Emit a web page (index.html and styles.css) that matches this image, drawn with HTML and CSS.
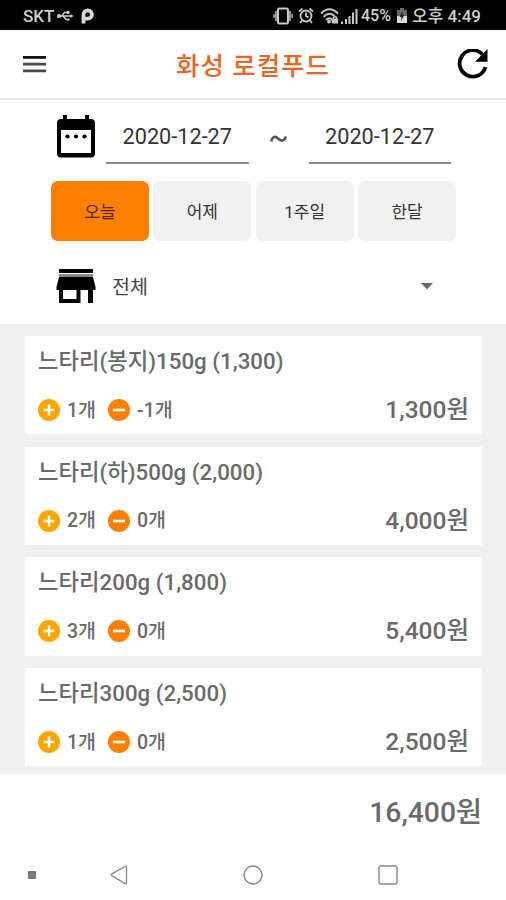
FILE: index.html
```html
<!DOCTYPE html>
<html lang="ko">
<head>
<meta charset="utf-8">
<title>화성 로컬푸드</title>
<link rel="stylesheet" href="styles.css">
</head>
<body>
<svg class="defs" width="0" height="0">
  <symbol id="plus" viewBox="0 0 22 22"><circle cx="11" cy="11" r="11" fill="#ffa405"/><path d="M11 5.500v11M5.500 11h11" stroke="#fff" stroke-width="2.400"/></symbol>
  <symbol id="minus" viewBox="0 0 22 22"><circle cx="11" cy="11" r="11" fill="#ff7f00"/><path d="M5 11h12" stroke="#fff" stroke-width="2.600"/></symbol>
</svg>
<div class="status">
  <span class="carrier">SKT</span>
  <svg class="usb" width="17" height="12" viewBox="0 0 17 12" fill="none" stroke="#cfcfcf" stroke-width="1.300"><path d="M2 6h12M4.500 6l3-3.500h3M6 6l3 3.500h2.500"/><circle cx="2" cy="6" r="1.300" fill="#cfcfcf"/><path d="M13.500 4l3 2-3 2z" fill="#cfcfcf" stroke="none"/><circle cx="11" cy="2.500" r="1" fill="#cfcfcf"/><path d="M10.500 8.500h2v2h-2z" fill="#cfcfcf" stroke="none"/></svg>
  <svg class="park" width="13" height="16" viewBox="0 0 13 16" fill="none" stroke="#d8d8d8" stroke-width="3.800"><path d="M2.500 15.500V6.500a4.200 4.200 0 1 1 4.200 4.200H3"/></svg>
  <svg class="vibrate" width="20" height="18" viewBox="0 0 20 18" fill="none" stroke="#c8c8c8"><rect x="5" y="1.500" width="10" height="15" rx="1.500" stroke-width="2"/><path d="M3 4v10M17 4v10" stroke-width="1.500"/><path d="M1 7v4M19 7v4" stroke-width="1.300"/></svg>
  <svg class="alarm" width="16" height="17" viewBox="0 0 16 17" fill="none" stroke="#c8c8c8" stroke-width="1.800"><circle cx="8" cy="9" r="5.500"/><path d="M8 5.500V9l2.500 1.500M1 4.500l3.500-3M15 4.500l-3.500-3M4 13.500l-2 2.500M12 13.500l2 2.500"/></svg>
  <svg class="wifi" width="19" height="17" viewBox="0 0 19 17" fill="none" stroke="#c8c8c8" stroke-width="1.800"><path d="M1 6.500q8.500-8.500 17 0M3.500 9.800q6-6 12 0M6 13q3.500-3.500 6 0"/><circle cx="9" cy="14.500" r="1" fill="#c8c8c8"/><path d="M12 11.500h6v5h-6z" fill="#c8c8c8" stroke="none"/><path d="M13.500 12v-2h3v2" stroke-width="1.200"/></svg>
  <svg class="signal" width="17" height="16" viewBox="0 0 17 16" fill="#c8c8c8"><path d="M0 13.500h2V16H0zM4 11h2v5H4zM7.500 8h2v8h-2zM11 4.500h2V16h-2zM14.500 1h2v15h-2z"/></svg>
  <span class="battery-text">45%</span>
  <svg class="battery" width="10" height="15" viewBox="0 0 10 15"><path d="M3 0h4v2h3v13H0V2h3z" fill="#666"/><path d="M0 8h10v7H0z" fill="#ddd"/><path d="M5.500 3L2.500 9h2l-.5 4 3.500-6h-2z" fill="#222"/></svg>
  <span class="clock">오후 4:49</span>
</div>
<header class="appbar">
  <svg width="23" height="17" viewBox="0 0 23 17"><path d="M0 0h23v2.800H0z" fill="#111"/><path d="M0 6.800h23v2.800H0zM0 13.500h23v2.800H0z" fill="#4a4a4a"/></svg>
  <h1>화성 로컬푸드</h1>
  <svg class="refresh" width="31" height="30" viewBox="0 0 31 30"><path d="M25.300 5.200A13.200 13.200 0 1 0 28.500 18" fill="none" stroke="#000" stroke-width="3.800"/><path d="M30.500 0v12.800H18z"/></svg>
</header>
<section class="filters">
  <div class="dates">
    <svg class="cal" width="40" height="44" viewBox="0 0 40 44"><path fill-rule="evenodd" d="M7 1h4v4h18V1h4v4h2a4 4 0 0 1 4 4v30.500a4 4 0 0 1-4 4H5a4 4 0 0 1-4-4V9a4 4 0 0 1 4-4h2zM5 16v23h30V16z"/><circle cx="11.500" cy="22.500" r="2.100"/><circle cx="20" cy="22.500" r="2.100"/><circle cx="28.500" cy="22.500" r="2.100"/></svg>
    <div class="date">2020-12-27</div>
    <svg class="tilde" width="17" height="8" viewBox="0 0 17 8"><path d="M1.200 6.500C2 2 5 .5 8 3.500c3.500 3.500 6.800 2.500 7.800-2" fill="none" stroke="#555" stroke-width="2.600"/></svg>
    <div class="date">2020-12-27</div>
  </div>
  <div class="ranges">
    <div class="range active">오늘</div><div class="range">어제</div><div class="range">1주일</div><div class="range">한달</div>
  </div>
  <div class="store">
    <svg width="40" height="35" viewBox="0 0 40 35"><path d="M3 0h34v4H3z"/><path d="M3 5h34v3H3z" fill="#888"/><path fill-rule="evenodd" d="M3 8h34l2.500 10v3H37v13h-5V21h-7.500v13H3V21H.5v-3zM7 21v9h13.500v-9z"/></svg>
    <span>전체</span>
    <svg class="caret" width="12" height="7" viewBox="0 0 12 7"><path d="M0 0h12L6 6.500z" fill="#666"/></svg>
  </div>
</section>
<main class="list">
  <article class="card"><h2>느타리(봉지)150g (1,300)</h2><div class="row"><svg class="ic"><use href="#plus"/></svg><span class="in">1개</span><svg class="ic"><use href="#minus"/></svg><span class="out">-1개</span><b>1,300원</b></div></article>
  <article class="card"><h2>느타리(하)500g (2,000)</h2><div class="row"><svg class="ic"><use href="#plus"/></svg><span class="in">2개</span><svg class="ic"><use href="#minus"/></svg><span class="out">0개</span><b>4,000원</b></div></article>
  <article class="card"><h2>느타리200g (1,800)</h2><div class="row"><svg class="ic"><use href="#plus"/></svg><span class="in">3개</span><svg class="ic"><use href="#minus"/></svg><span class="out">0개</span><b>5,400원</b></div></article>
  <article class="card"><h2>느타리300g (2,500)</h2><div class="row"><svg class="ic"><use href="#plus"/></svg><span class="in">1개</span><svg class="ic"><use href="#minus"/></svg><span class="out">0개</span><b>2,500원</b></div></article>
</main>
<div class="total">16,400원</div>
<nav class="nav">
  <svg class="dot" width="8" height="8"><rect width="8" height="8" rx="1" fill="#777"/></svg>
  <svg class="back" width="18" height="20" viewBox="0 0 18 20"><path d="M15.500 1.200L1.800 8.900q-1.200.8 0 1.700l13.700 8.200q1 .4 1-.8V2q0-1.200-1-.8z" fill="none" stroke="#888" stroke-width="1.300"/></svg>
  <svg class="home" width="20" height="20"><circle cx="10" cy="10" r="9" fill="none" stroke="#888" stroke-width="1.400"/></svg>
  <svg class="recent" width="20" height="20"><rect x="1" y="1" width="18" height="18" rx="2" fill="none" stroke="#888" stroke-width="1.400"/></svg>
</nav>
</body>
</html>
```
FILE: styles.css
```css
* { box-sizing: border-box; }
body {
  margin: 0;
  width: 506px;
  height: 900px;
  overflow: hidden;
  display: flex;
  flex-direction: column;
  background: #fff;
  font-family: Roboto, "Noto Sans CJK KR", sans-serif;
  color: #6a6a6a;
}
svg { display: block; flex: none; }
.defs { position: absolute; }
.status {
  height: 30px;
  flex: none;
  background: #000;
  color: #cfcfcf;
  display: flex;
  align-items: center;
  padding: 1px 25px 0 23px;
  font-size: 17px;
  font-weight: 500;
  white-space: nowrap;
  line-height: 28px;
}
.carrier { width: 34px; }
.park { margin-left: 7px; }
.vibrate { margin-left: auto; }
.alarm { margin-left: 5px; }
.wifi { margin-left: 6px; }
.signal { margin-left: 2px; }
.battery-text { margin-left: 3px; width: 31px; font-size: 16px; }
.battery { margin-left: 5px; }
.clock { margin-left: 5px; width: 69px; }
.appbar {
  height: 70px;
  flex: none;
  display: flex;
  align-items: center;
  justify-content: space-between;
  padding: 0 18px 0 23px;
  border-bottom: 2px solid #e8e8e8;
}
.appbar h1 {
  margin: 0;
  padding: 4px 0 0 3px;
  font-size: 25.500px;
  font-weight: 500;
  letter-spacing: 1px;
  line-height: 36px;
  color: #ea6424;
}
.filters { height: 224px; flex: none; padding: 14px 50px 0 51px; }
.dates { display: flex; height: 50px; padding-left: 5px; }
.date {
  width: 142.500px;
  height: 50px;
  border-bottom: 2px solid #8a8a8a;
  text-align: center;
  font-size: 21.700px;
  line-height: 46px;
  color: #333;
}
.cal { margin-right: 10px; }
.tilde { margin: 21px 22px 0 21px; }
.ranges { display: flex; gap: 4.500px; margin-top: 17px; }
.range {
  flex: 1;
  height: 60px;
  border-radius: 7px;
  background: #f1f1f1;
  color: #333;
  text-align: center;
  font-size: 17px;
  line-height: 62px;
}
.range.active { background: #ff7f00; color: #4b2300; }
.store {
  display: flex;
  align-items: center;
  height: 36px;
  margin-top: 27px;
  padding-left: 5px;
  font-size: 19.500px;
  color: #444;
}
.store span { margin-left: 16px; padding-bottom: 1px; }
.caret { margin: 0 23px 0 auto; }
.list {
  height: 450px;
  flex: none;
  background: #f0f0f0;
  padding: 12px 24px 0 25px;
  display: flex;
  flex-direction: column;
  gap: 12.300px;
}
.card { height: 98.400px; flex: none; background: #fff; padding: 9px 13px 0; }
.card h2 { margin: 0; font-size: 22.300px; font-weight: 500; line-height: 32px; white-space: nowrap; }
.row {
  display: flex;
  align-items: center;
  height: 32px;
  margin-top: 17px;
  font-size: 19.500px;
  font-weight: 500;
  line-height: 28px;
}
.ic { width: 22px; height: 22px; margin-right: 7px; }
.in, .out { padding-top: 1px; }
.in { width: 41px; }
.row b { margin-left: auto; font-size: 24.500px; font-weight: 500; }
.total {
  height: 76px;
  flex: none;
  padding-right: 24px;
  text-align: right;
  font-size: 28.300px;
  font-weight: 500;
  line-height: 77px;
}
.nav { display: flex; align-items: center; height: 50px; padding-left: 28px; }
.back { margin-left: 74px; }
.home { margin-left: 115px; }
.recent { margin-left: 115px; }
```
